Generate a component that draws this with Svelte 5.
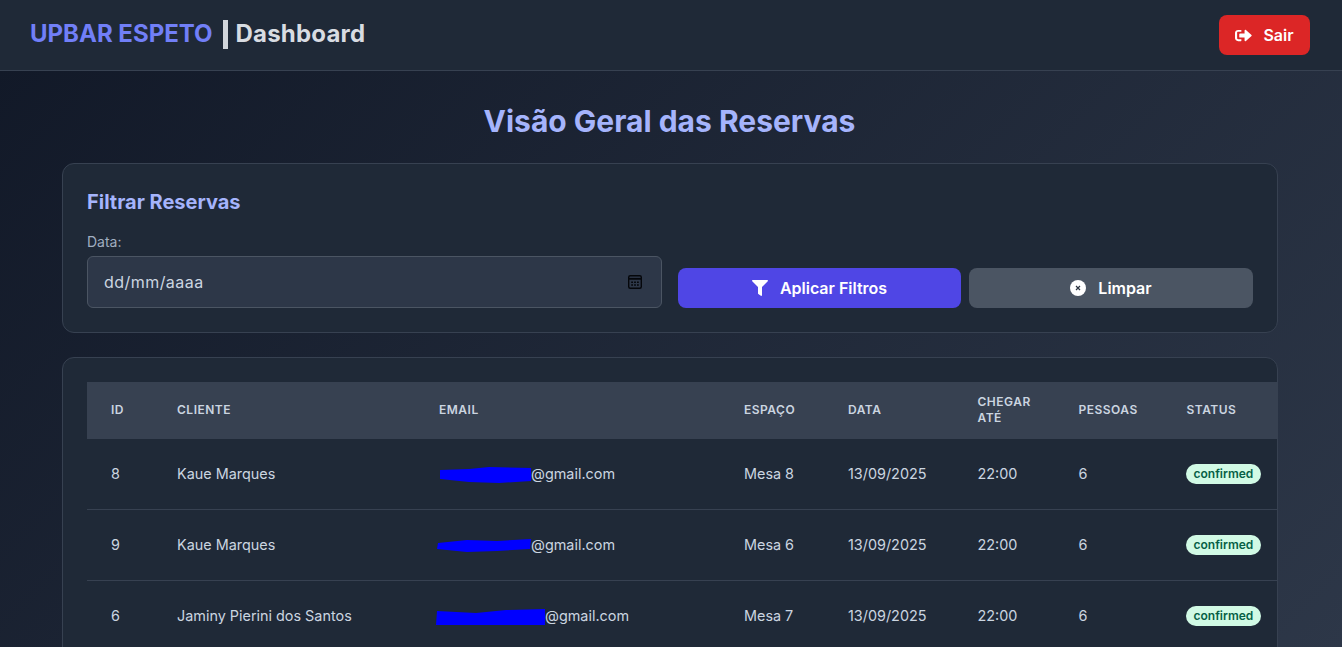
<script>
    // VARS
    const columns = ['ID', 'Cliente', 'Email', 'Espaço', 'Data', 'Chegar até', 'Pessoas', 'Status'];
    const reservas = [
        { id: 8, cliente: 'Kaue Marques', gap: 92, blob: 'M1 3 L30 2 L50 0 L92 1 L92 14 L60 16 L30 15 L1 12 Z', w: 93, h: 17, left: 0, top: 4, mesa: 'Mesa 8' },
        { id: 9, cliente: 'Kaue Marques', gap: 92, blob: 'M1 4 L30 1 L60 2 L94 0 L93 10 L60 12 L30 13 L0 10 Z', w: 95, h: 15, left: -2, top: 5, mesa: 'Mesa 6' },
        { id: 6, cliente: 'Jaminy Pierini dos Santos', gap: 106, blob: 'M1 2 L40 4 L70 1 L109 0 L109 16 L0 16 Z', w: 109, h: 16, left: -3, top: 4, mesa: 'Mesa 7' }
    ];
</script>

<header class="topbar">
    <h1 class="brand"><span class="logo">UPBAR ESPETO</span><span class="bar"></span><span class="dash">Dashboard</span></h1>
    <button class="btn btn-logout">
        <svg width="17" height="15" viewBox="0 0 512 512" preserveAspectRatio="none"><path fill="#fff" d="M497 273L329 441c-15 15-41 4.500-41-17v-96H152c-13.300 0-24-10.700-24-24v-96c0-13.300 10.700-24 24-24h136V88c0-21.400 25.900-32 41-17l168 168c9.300 9.400 9.300 24.600 0 34zM192 436v-40c0-6.600-5.400-12-12-12H96c-17.700 0-32-14.300-32-32V160c0-17.700 14.300-32 32-32h84c6.600 0 12-5.400 12-12V76c0-6.600-5.400-12-12-12H96c-53 0-96 43-96 96v192c0 53 43 96 96 96h84c6.600 0 12-5.400 12-12z"/></svg>
        Sair
    </button>
</header>

<main class="content">
    <h2 class="title">Visão Geral das Reservas</h2>

    <section class="card filter">
        <h3>Filtrar Reservas</h3>
        <div class="filter-grid">
            <div class="field">
                <span class="label">Data:</span>
                <div class="date-input">
                    <span>dd/mm/aaaa</span>
                    <svg width="16" height="16" viewBox="0 0 16 16" fill="none"><rect x="1.700" y="1.700" width="12.600" height="12.600" rx="1.500" stroke="#05070b" stroke-width="1.400"/><path d="M2 4.800h12" stroke="#05070b" stroke-width="1.800"/><path d="M4.200 7.400h1.800v1.600H4.200zM7.100 7.400h1.800v1.600H7.100zM10 7.400h1.800v1.600H10zM4.200 10.200h1.800v1.600H4.200zM7.100 10.200h1.800v1.600H7.100zM10 10.200h1.800v1.600H10z" fill="#05070b"/></svg>
                </div>
            </div>
            <div class="actions">
                <button class="btn btn-apply">
                    <svg width="16" height="16" viewBox="0 0 512 512"><path fill="#fff" d="M487.976 0H24.028C2.710 0-8.047 25.866 7.058 40.971L192 225.941V432c0 7.831 3.821 15.170 10.237 19.662l80 55.980C298.020 518.690 320 507.493 320 487.980V225.941l184.947-184.970C520.021 25.896 509.338 0 487.976 0z"/></svg>
                    Aplicar Filtros
                </button>
                <button class="btn btn-clear">
                    <svg width="16" height="16" viewBox="0 0 16 16"><circle cx="8" cy="8" r="8" fill="#fff"/><path d="M6 6l4 4M10 6l-4 4" stroke="#2b3440" stroke-width="1.200"/></svg>
                    Limpar
                </button>
            </div>
        </div>
    </section>

    <section class="card table-card">
        <table>
            <colgroup>
                <col style="width: 66px" />
                <col style="width: 262px" />
                <col style="width: 305px" />
                <col style="width: 104px" />
                <col style="width: 129.500px" />
                <col style="width: 101px" />
                <col style="width: 108px" />
                <col style="width: 123.500px" />
            </colgroup>
            <thead>
                <tr>
                    {#each columns as col}
                        <th>{col}</th>
                    {/each}
                </tr>
            </thead>
            <tbody>
                {#each reservas as r}
                    <tr>
                        <td>{r.id}</td>
                        <td>{r.cliente}</td>
                        <td>
                            <span class="email" style="padding-left: {r.gap}px">
                                <svg class="blob" width={r.w} height={r.h} style="left: {r.left}px; top: {r.top}px"><path d={r.blob} fill="#0000ff" /></svg>@gmail.com
                            </span>
                        </td>
                        <td>{r.mesa}</td>
                        <td>13/09/2025</td>
                        <td>22:00</td>
                        <td>6</td>
                        <td><span class="badge">confirmed</span></td>
                    </tr>
                {/each}
            </tbody>
        </table>
    </section>
</main>

<style>
    :global(body) {
        margin: 0;
        height: 647px;
        overflow: hidden;
        font-family: Inter, "Liberation Sans", sans-serif;
        background: linear-gradient(135deg, #111827 0%, #2d3748 100%);
        color: #e5e7eb;
    }
    .topbar {
        height: 70px;
        display: flex;
        align-items: center;
        justify-content: space-between;
        padding: 0 32px 0 30px;
        background: #1f2937;
        border-bottom: 1px solid #374151;
    }
    .brand {
        margin: 0;
        display: flex;
        align-items: center;
        font-size: 24px;
        font-weight: 700;
        line-height: 32px;
        position: relative;
        top: -1px;
    }
    .logo {
        color: #717ff7;
    }
    .bar {
        width: 5px;
        height: 29px;
        margin: 0 8px 0 10px;
        background: #d1d5db;
    }
    .dash {
        color: #d8dce2;
        letter-spacing: 0.2px;
    }
    .btn {
        display: flex;
        align-items: center;
        justify-content: center;
        border: 0;
        padding: 0;
        border-radius: 8px;
        color: #fff;
        font-family: inherit;
        font-size: 16px;
        font-weight: 600;
    }
    .btn-logout {
        width: 91px;
        height: 40px;
        gap: 11px;
        background: #dc2626;
    }
    .content {
        margin: 0 64px 0 62px;
    }
    .title {
        margin: 0;
        padding: 32px 1px 0 0;
        height: 60px;
        text-align: center;
        font-size: 30px;
        font-weight: 700;
        line-height: 36px;
        color: #a5b4fc;
    }
    .card {
        box-sizing: border-box;
        background: #1f2937;
        border: 1px solid #374151;
        border-radius: 12px;
    }
    .filter {
        height: 170px;
        padding: 24px;
        margin-bottom: 24px;
    }
    .filter h3 {
        margin: 0 0 16px;
        font-size: 20px;
        font-weight: 700;
        line-height: 28px;
        color: #a5b4fc;
    }
    .filter-grid {
        display: grid;
        grid-template-columns: 1fr 1fr;
        gap: 16px;
        align-items: end;
    }
    .label {
        display: block;
        margin-bottom: 4px;
        font-size: 14px;
        line-height: 20px;
        color: #a0aec0;
    }
    .date-input {
        box-sizing: border-box;
        height: 52px;
        display: flex;
        align-items: center;
        justify-content: space-between;
        padding: 0 18px 0 16px;
        background: #2d3748;
        border: 1px solid #4b5563;
        border-radius: 6px;
        font-size: 16px;
        letter-spacing: 0.45px;
        color: #cbd5e0;
    }
    .actions {
        display: grid;
        grid-template-columns: 283px 1fr;
        gap: 8px;
    }
    .actions .btn {
        height: 40px;
    }
    .btn-apply {
        gap: 12px;
        background: #4f46e5;
    }
    .btn-clear {
        gap: 12px;
        background: #4b5563;
    }
    .table-card {
        height: 400px;
        padding: 24px 0 0 24px;
        overflow: hidden;
    }
    table {
        width: 1199px;
        table-layout: fixed;
        border-collapse: separate;
        border-spacing: 0;
    }
    th {
        box-sizing: border-box;
        height: 57px;
        padding: 0 24px 2px;
        background: #374151;
        text-align: left;
        font-size: 12px;
        font-weight: 600;
        line-height: 16px;
        letter-spacing: 0.5px;
        text-transform: uppercase;
        color: #cbd5e0;
    }
    td {
        box-sizing: border-box;
        padding: 23px 24px 25px;
        border-bottom: 1px solid #374151;
        font-size: 14.400px;
        line-height: 21px;
        color: #cbd5e0;
        white-space: nowrap;
    }
    tbody tr:first-child td {
        height: 71px;
    }
    tbody tr + tr td {
        height: 70px;
    }
    .email {
        position: relative;
        display: inline-block;
    }
    .blob {
        position: absolute;
    }
    .badge {
        display: inline-block;
        padding: 0 8px;
        margin-left: -1px;
        border-radius: 999px;
        background: #d1fae5;
        color: #065f46;
        font-size: 12px;
        font-weight: 600;
        line-height: 20px;
    }
</style>
